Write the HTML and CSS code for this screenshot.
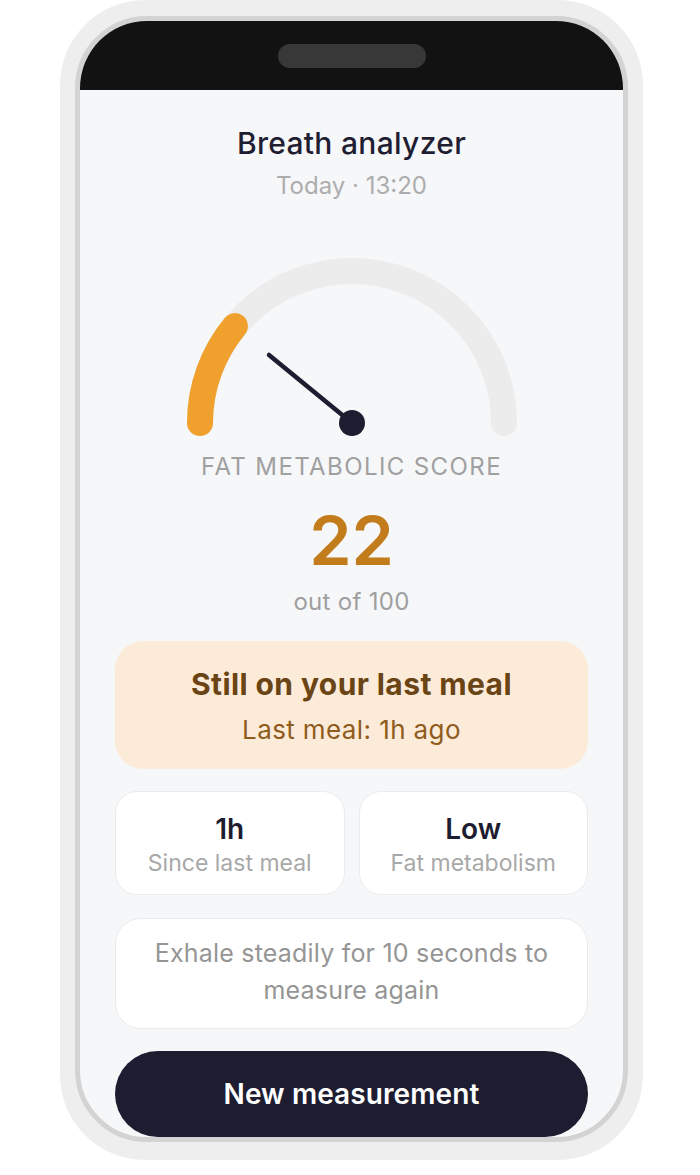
FILE: index.html
```html
<!DOCTYPE html>
<html lang="en">
<head>
<meta charset="utf-8">
<title>Breath analyzer</title>
<link rel="stylesheet" href="styles.css">
</head>
<body>
<div class="phone">
  <div class="screen">
    <div class="notch-bar"><div class="notch"></div></div>
    <div class="content">
      <h1 class="title">Breath analyzer</h1>
      <div class="subtitle">Today · 13:20</div>
      <svg class="gauge" width="360" height="240" viewBox="0 0 360 240">
        <path d="M 28 222 A 152 152 0 0 1 332 222" fill="none" stroke="#ececec" stroke-width="26" stroke-linecap="round"/>
        <path d="M 28 222 A 152 152 0 0 1 62.9 125.1" fill="none" stroke="#f0a12d" stroke-width="26" stroke-linecap="round"/>
        <line x1="180" y1="222" x2="97" y2="154" stroke="#1d1c30" stroke-width="4.5" stroke-linecap="round"/>
        <circle cx="180" cy="222" r="13" fill="#1d1c30"/>
      </svg>
      <div class="score-label">FAT METABOLIC SCORE</div>
      <div class="score">22</div>
      <div class="score-max">out of 100</div>
      <div class="status-card">
        <div class="status-title">Still on your last meal</div>
        <div class="status-sub">Last meal: 1h ago</div>
      </div>
      <div class="stats">
        <div class="stat-card">
          <div class="stat-value">1h</div>
          <div class="stat-label">Since last meal</div>
        </div>
        <div class="stat-card">
          <div class="stat-value">Low</div>
          <div class="stat-label">Fat metabolism</div>
        </div>
      </div>
      <div class="tip-card">Exhale steadily for 10 seconds to measure again</div>
      <button class="primary-btn">New measurement</button>
    </div>
  </div>
</div>
</body>
</html>
```

FILE: styles.css
```css
* { box-sizing: border-box; }
html, body { margin: 0; padding: 0; background: #ffffff; }
body {
  font-family: "Inter", "Noto Sans", "Liberation Sans", sans-serif;
  width: 700px;
  height: 1175px;
  overflow: hidden;
}
.phone {
  margin-left: 60px;
  width: 583px;
  height: 1160px;
  background: #eeeeee;
  border-radius: 85px;
  padding: 16px 15px 18px 15px;
}
.screen {
  height: 100%;
  border: 5px solid #d3d3d3;
  border-radius: 72px;
  background: #f6f7f9;
  overflow: hidden;
  display: flex;
  flex-direction: column;
}
.notch-bar {
  height: 69px;
  background: #121212;
  flex: none;
  display: flex;
  justify-content: center;
  padding-top: 23px;
}
.notch {
  width: 148px;
  height: 24px;
  border-radius: 12px;
  background: #383838;
}
.content {
  padding: 35px 35px 0 35px;
  display: flex;
  flex-direction: column;
  align-items: center;
}
.title {
  margin: 0;
  font-size: 30px;
  line-height: 36px;
  font-weight: 500;
  letter-spacing: 0.3px;
  color: #1f1e33;
}
.subtitle {
  margin-top: 10px;
  font-size: 24px;
  line-height: 30px;
  color: #adadad;
}
.gauge {
  display: block;
  flex: none;
}
.score-label {
  margin-top: 12px;
  font-size: 24px;
  line-height: 28px;
  letter-spacing: 1.4px;
  color: #a0a0a0;
}
.score {
  margin-top: 19px;
  font-size: 68px;
  line-height: 80px;
  font-weight: 600;
  color: #c27c1c;
}
.score-max {
  margin-top: 8px;
  font-size: 24px;
  line-height: 28px;
  letter-spacing: 0.3px;
  color: #9f9f9f;
}
.status-card {
  margin-top: 25px;
  width: 100%;
  height: 128px;
  background: #fcebd8;
  border-radius: 28px;
  padding-top: 26px;
  text-align: center;
}
.status-title {
  font-size: 30px;
  line-height: 34px;
  font-weight: 700;
  letter-spacing: 0.4px;
  color: #6a4414;
}
.status-sub {
  margin-top: 13px;
  font-size: 26px;
  line-height: 32px;
  letter-spacing: 0.4px;
  color: #8f5c1e;
}
.stats {
  margin-top: 22px;
  width: 100%;
  display: grid;
  grid-template-columns: 1fr 1fr;
  gap: 14px;
}
.stat-card {
  height: 104px;
  background: #ffffff;
  border: 1px solid #ebebeb;
  border-radius: 22px;
  padding-top: 21px;
  text-align: center;
}
.stat-value {
  font-size: 28px;
  line-height: 32px;
  font-weight: 600;
  color: #1d1c30;
}
.stat-label {
  margin-top: 5px;
  font-size: 23px;
  line-height: 26px;
  color: #a8a8a8;
}
.tip-card {
  margin-top: 23px;
  width: 100%;
  height: 111px;
  background: #ffffff;
  border: 1px solid #ebebeb;
  border-radius: 26px;
  padding: 16px 24px 0 24px;
  text-align: center;
  font-size: 25px;
  line-height: 37px;
  letter-spacing: 0.2px;
  color: #959595;
}
.primary-btn {
  margin-top: 22px;
  width: 100%;
  height: 86px;
  flex: none;
  border: none;
  border-radius: 43px;
  background: #1d1c30;
  color: #ffffff;
  font-family: inherit;
  font-size: 28px;
  font-weight: 600;
  letter-spacing: 0.1px;
}
```
